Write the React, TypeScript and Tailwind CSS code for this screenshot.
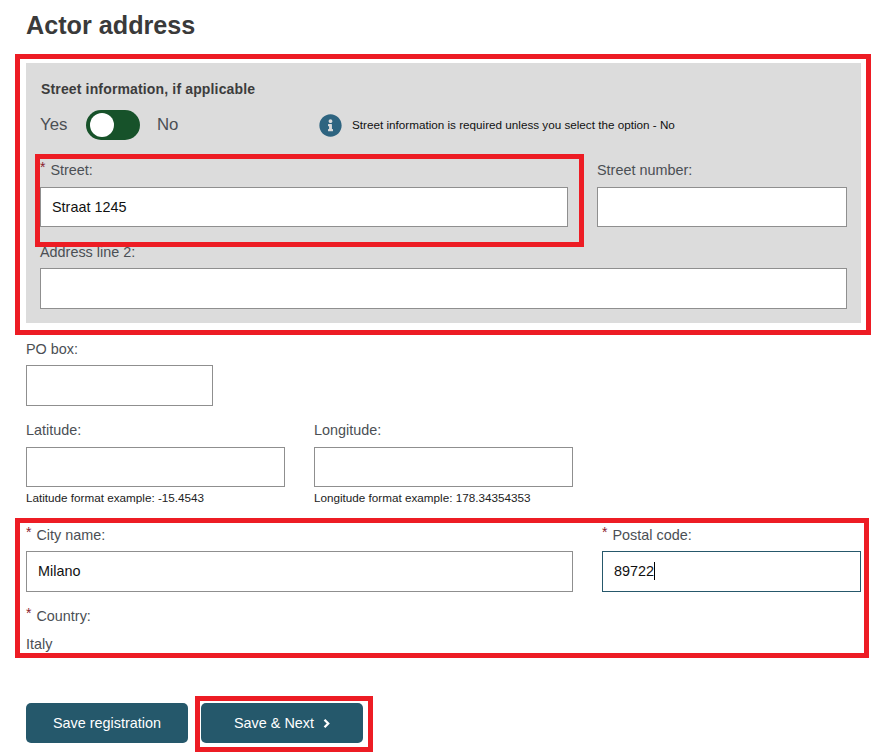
import type { ReactNode } from "react";
import clsx from "clsx";
import { FaInfoCircle } from "react-icons/fa";

function Label({ children, required = false, className }: { children: ReactNode; required?: boolean; className?: string }) {
  return (
    <div className={clsx("flex h-5 items-center text-[14.4px] leading-5 text-[#4b4f54]", className)}>
      {required ? <span className="mr-[5px] -mt-[6px] text-[14px] text-[#8a1c2c]">*</span> : null}
      {children}
    </div>
  );
}

function TextInput({ value = "", className, focused = false }: { value?: string; className?: string; focused?: boolean }) {
  return (
    <input
      readOnly
      value={value}
      className={clsx(
        "block w-full border bg-white px-[11px] text-[14.4px] text-[#111] outline-none",
        focused ? "border-[#26586b]" : "border-[#8f8f8f]",
        className,
      )}
    />
  );
}

function ActionButton({ children }: { children: ReactNode }) {
  return (
    <button
      type="button"
      className="flex h-10 w-[162px] items-center justify-center gap-[9px] rounded-[5px] bg-[#25586b] pt-px text-[14.4px] text-white"
    >
      {children}
    </button>
  );
}

export default function App() {
  return (
    <div className="relative h-[755px] w-[877px] overflow-hidden bg-white pl-[26px] pr-[16px] font-['Liberation_Sans',Arial,sans-serif]">
      <h1 className="flex h-[50px] items-center pt-px text-[25.2px] font-bold text-[#3a3a3a]">Actor address</h1>

      <section className="mt-[13px] h-[260px] bg-[#dcdcdc] px-[14px] pt-[18px]">
        <div className="flex h-4 items-center pl-px text-[14px] font-bold tracking-[0.15px] text-[#3c3c3c]">
          Street information, if applicable
        </div>

        <div className="mt-[13px] flex h-[30px] items-center">
          <span className="w-[46px] text-[16.8px] text-[#4b4f54]">Yes</span>
          <span className="flex h-[30px] w-[54px] items-center rounded-full bg-[#17522a] pl-[4px]">
            <span className="h-[24px] w-[24px] rounded-full bg-white" />
          </span>
          <span className="ml-[17px] w-[162px] text-[16.8px] text-[#4b4f54]">No</span>
          <FaInfoCircle className="text-[#2e6480]" size={23} />
          <span className="ml-[10px] text-[11.7px] text-[#111]">Street information is required unless you select the option - No</span>
        </div>

        <div className="mt-[20px] grid grid-cols-[528px_250px] gap-x-[29px]">
          <div>
            <Label required>Street:</Label>
            <TextInput value="Straat 1245" className="mt-[7px] h-10" />
          </div>
          <div>
            <Label>Street number:</Label>
            <TextInput className="mt-[7px] h-10" />
          </div>
        </div>

        <Label className="mt-[15px]">Address line 2:</Label>
        <TextInput className="mt-[6px] h-[41px]" />
      </section>

      <Label className="mt-[16px]">PO box:</Label>
      <div className="mt-[6px] w-[187px]">
        <TextInput className="h-[41px]" />
      </div>

      <div className="mt-[14px] grid w-[547px] grid-cols-[259px_259px] gap-x-[29px]">
        <div>
          <Label>Latitude:</Label>
          <TextInput className="mt-[7px] h-10" />
          <p className="mt-[4px] h-[14px] text-[11.7px] leading-[14px] text-[#222]">Latitude format example: -15.4543</p>
        </div>
        <div>
          <Label>Longitude:</Label>
          <TextInput className="mt-[7px] h-10" />
          <p className="mt-[4px] h-[14px] text-[11.7px] leading-[14px] text-[#222]">Longitude format example: 178.34354353</p>
        </div>
      </div>

      <div className="mt-[20px] grid grid-cols-[547px_259px] gap-x-[29px]">
        <div>
          <Label required>City name:</Label>
          <TextInput value="Milano" className="mt-[6px] h-[41px] pb-[2px]" />
        </div>
        <div>
          <Label required>Postal code:</Label>
          <div className="relative mt-[6px]">
            <TextInput value="89722" focused className="h-[41px] pb-[2px]" />
            {/* caret of the focused field */}
            <span className="absolute left-[52px] top-[11px] h-[18px] w-px bg-black" />
          </div>
        </div>
      </div>

      <Label required className="mt-[14px]">Country:</Label>
      <div className="mt-[8px] h-5 text-[14.4px] leading-5 text-[#4b4f54]">Italy</div>

      <div className="mt-[49px] flex gap-[13px]">
        <ActionButton>Save registration</ActionButton>
        <ActionButton>
          Save &amp; Next
          <svg width="7" height="9" viewBox="0 0 7 9" fill="none" stroke="currentColor" strokeWidth="2.3">
            <path d="M1.5 0.8 L5.2 4.5 L1.5 8.2" />
          </svg>
        </ActionButton>
      </div>

      {/* review annotations drawn over the form */}
      <div className="absolute left-[15px] top-[54px] h-[281px] w-[856px] border-[5px] border-[#ed1c24]" />
      <div className="absolute left-[35px] top-[154px] h-[93px] w-[549px] border-[5px] border-[#ed1c24]" />
      <div className="absolute left-[15px] top-[518px] h-[140px] w-[854px] border-[5px] border-[#ed1c24]" />
      <div className="absolute left-[195px] top-[696px] h-[56px] w-[178px] border-[5px] border-[#ed1c24]" />
    </div>
  );
}
